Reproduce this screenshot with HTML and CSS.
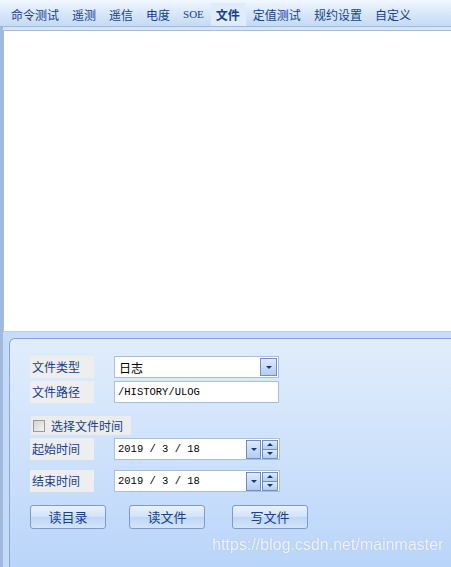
FILE: index.html
```html
<!DOCTYPE html>
<html>
<head>
<meta charset="utf-8">
<link rel="stylesheet" href="styles.css">
</head>
<body>
<div class="page">
  <div class="tabs">
    <div class="tab">命令测试</div>
    <div class="tab">遥测</div>
    <div class="tab">遥信</div>
    <div class="tab">电度</div>
    <div class="tab soe">SOE</div>
    <div class="tab active">文件</div>
    <div class="tab">定值测试</div>
    <div class="tab">规约设置</div>
    <div class="tab">自定义</div>
  </div>
  <div class="body">
    <div class="strip"></div>
    <div class="content">
      <div class="pane-wrap"><div class="pane"></div></div>
      <div class="band"></div>
      <div class="panel">
        <div class="row">
          <div class="label">文件类型</div>
          <div class="field combo">
            <span class="val">日志</span>
            <span class="btn dd"><i class="down"></i></span>
          </div>
        </div>
        <div class="row r2">
          <div class="label">文件路径</div>
          <div class="field"><span class="mono">/HISTORY/ULOG</span></div>
        </div>
        <div class="row check-row">
          <div class="check"><span class="box"></span><span>选择文件时间</span></div>
        </div>
        <div class="row r3">
          <div class="label">起始时间</div>
          <div class="field date">
            <span class="mono">2019 / 3 / 18</span>
            <span class="btn dd2"><i class="down"></i></span>
            <span class="spin"><span class="half"><i class="up"></i></span><span class="half"><i class="down"></i></span></span>
          </div>
        </div>
        <div class="row r4">
          <div class="label">结束时间</div>
          <div class="field date">
            <span class="mono">2019 / 3 / 18</span>
            <span class="btn dd2"><i class="down"></i></span>
            <span class="spin"><span class="half"><i class="up"></i></span><span class="half"><i class="down"></i></span></span>
          </div>
        </div>
        <div class="buttons">
          <div class="button">读目录</div>
          <div class="button b2">读文件</div>
          <div class="button b3">写文件</div>
        </div>
      </div>
    </div>
  </div>
  <div class="watermark">https://blog.csdn.net/mainmaster</div>
</div>
</body>
</html>
```
FILE: styles.css
```css
html, body { margin: 0; padding: 0; }
body { background: #c2d9f7; }
.page {
  width: 451px; height: 567px; position: relative; overflow: hidden;
  font-family: "Noto Sans CJK SC", "Liberation Sans", sans-serif;
  color: #15428b;
}
.tabs {
  display: flex; align-items: flex-end;
  height: 26px; border-bottom: 1px solid #9cb8dd;
  background: linear-gradient(#f1f7fe, #dbe9fb 45%, #c5daf6);
  padding-left: 5px;
}
.tab {
  height: 23px; line-height: 23px; padding: 0 6px; margin-right: 1px;
  font-size: 12px; color: #15428b; white-space: nowrap;
}
.tab.soe { font-family: "Liberation Serif", serif; font-size: 11px; }
.tab.active { background: #e1ecfa; font-weight: bold; padding: 0 6px 0 5px; }
.body { display: flex; height: 540px; }
.strip { width: 3px; background: #a0b9df; }
.content { flex: 1; display: flex; flex-direction: column; background: #c4daf7; }
.pane-wrap { padding-top: 3px; background: #d5e5f9; }
.pane {
  height: 300px; background: #fff;
  border-top: 1px solid #a7bedc; border-left: 1px solid #a7bedc;
}
.band { height: 6px; background: #c8dcf6; border-top: 1px solid #b5cdee; }
.panel {
  flex: 1; margin-left: 6px;
  border-top: 1px solid #7ea6dc; border-left: 1px solid #8aa8d6;
  border-top-left-radius: 6px;
  background: linear-gradient(#e1edfc, #d2e4fb 40%, #bad5fa);
  padding: 17px 0 0 20px;
}
.row { display: flex; height: 22px; }
.r2 { margin-top: 3px; }
.check-row { margin-top: 13px; height: 19px; }
.r3 { margin-top: 3px; }
.r4 { margin-top: 10px; }
.label {
  width: 62px; height: 22px; line-height: 22px; padding-left: 2px;
  background: #eeeeee; font-size: 12px; color: #15428b;
}
.field {
  margin-left: 20px; width: 163px; height: 20px;
  background: #fff; border: 1px solid #a8bedc;
  display: flex; align-items: center; position: relative;
  font-size: 12px; color: #000;
}
.val { padding-left: 4px; font-size: 12px; flex: 1; }
.mono { font-family: "Liberation Mono", monospace; font-size: 10.5px; padding-left: 3px; color: #000; flex: 1; }
.btn {
  display: flex; align-items: center; justify-content: center;
  border: 1px solid #6f8fc2;
  background: linear-gradient(#dde9fb, #b3cdf1);
  box-sizing: border-box;
}
.dd { width: 17px; height: 18px; margin-right: 1px; }
.dd2 { width: 15px; height: 19px; }
.spin {
  width: 16px; height: 19px; display: flex; flex-direction: column;
  margin-right: 1px; margin-left: 1px;
}
.spin .half {
  flex: 1; display: flex; align-items: center; justify-content: center;
  border: 1px solid #6f8fc2; background: linear-gradient(#dde9fb, #b3cdf1);
}
.spin .half + .half { border-top: none; }
i.down, i.up { display: block; width: 0; height: 0; border-left: 3px solid transparent; border-right: 3px solid transparent; }
i.down { border-top: 3px solid #1b3470; }
i.up { border-bottom: 3px solid #1b3470; }
.check {
  margin-left: 1px; width: 100px; height: 19px; background: #ececec;
  display: flex; align-items: center; font-size: 12px; color: #15428b;
}
.check .box {
  width: 10px; height: 10px; margin: 0 6px 0 2px;
  border: 1px solid #9a9a9a;
  background: linear-gradient(135deg, #d3d3d3, #f4f4f4);
}
.date { width: 164px; }
.buttons { display: flex; margin-top: 13px; }
.button {
  width: 74px; height: 22px; line-height: 22px; text-align: center;
  border: 1px solid #7d9acb; border-radius: 3px;
  background: linear-gradient(#e9f1fd, #d2e3f9 48%, #bfd6f6 52%, #d3e4fa);
  font-size: 13px; color: #15428b;
}
.b2 { margin-left: 23px; }
.b3 { margin-left: 27px; }
.watermark {
  position: absolute; left: 212px; top: 536px;
  font-family: "Liberation Sans", sans-serif; font-size: 16px;
  color: rgba(255,255,255,0.85);
  text-shadow: 0 0 1px rgba(120,140,170,0.5);
}
```
